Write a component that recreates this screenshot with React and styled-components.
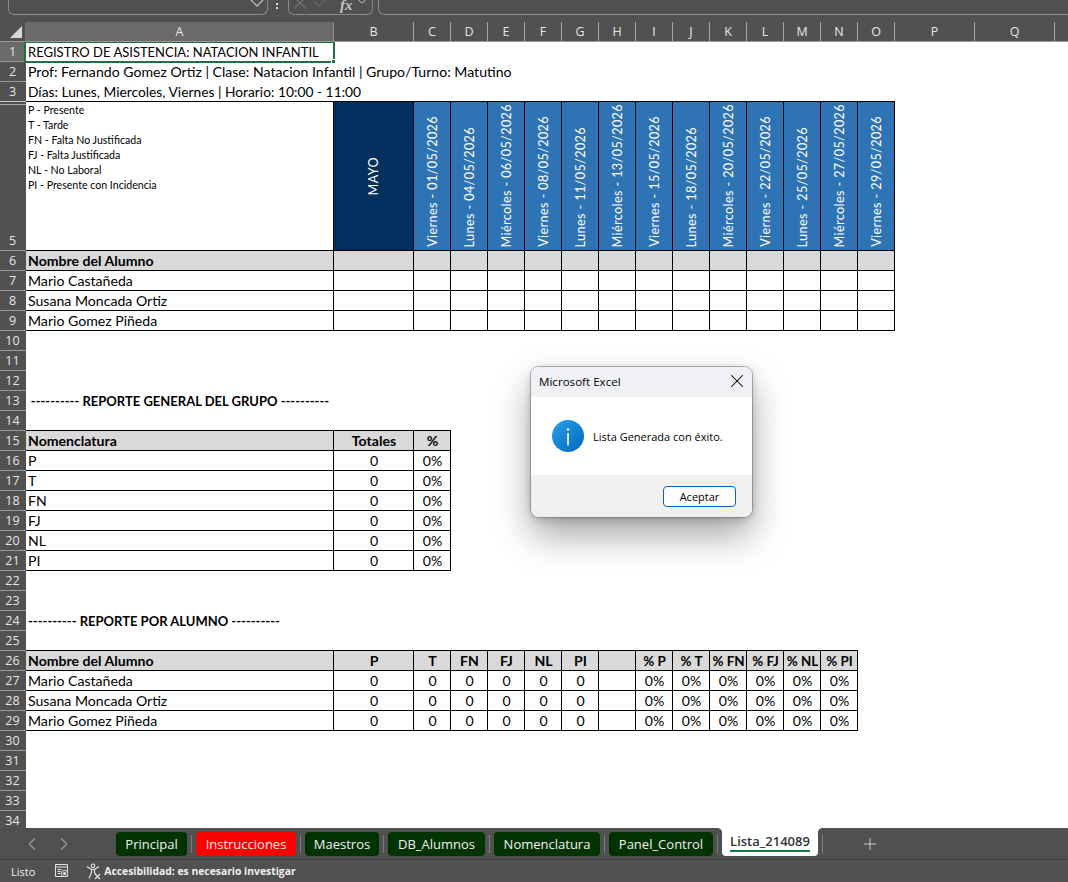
import React from "react";
import styled, { createGlobalStyle } from "styled-components";
import { ChevronDown, Check, X, ChevronLeft, ChevronRight, Plus } from "lucide-react";

const GlobalStyle = createGlobalStyle`
  html, body {
    margin: 0;
    padding: 0;
    background: #fff;
  }
`;

const COLS = "308px 80px repeat(14, 37px) 80px 80px 80px";
const HEADERS = [
  ["A", 308], ["B", 80], ["C", 37], ["D", 37], ["E", 37], ["F", 37], ["G", 37], ["H", 37], ["I", 37],
  ["J", 37], ["K", 37], ["L", 37], ["M", 37], ["N", 37], ["O", 37], ["P", 80], ["Q", 80],
];

const DATES = [
  "Viernes - 01/05/2026", "Lunes - 04/05/2026", "Miércoles - 06/05/2026", "Viernes - 08/05/2026",
  "Lunes - 11/05/2026", "Miércoles - 13/05/2026", "Viernes - 15/05/2026", "Lunes - 18/05/2026",
  "Miércoles - 20/05/2026", "Viernes - 22/05/2026", "Lunes - 25/05/2026", "Miércoles - 27/05/2026",
  "Viernes - 29/05/2026",
];

const LEGEND = [
  "P - Presente", "T - Tarde", "FN - Falta No Justificada", "FJ - Falta Justificada",
  "NL - No Laboral", "PI - Presente con Incidencia",
];

const STUDENTS = ["Mario Castañeda", "Susana Moncada Ortiz", "Mario Gomez Piñeda"];
const CODES = ["P", "T", "FN", "FJ", "NL", "PI"];
const TABS = [
  { name: "Principal", width: 71 },
  { name: "Instrucciones", width: 100, red: true },
  { name: "Maestros", width: 74 },
  { name: "DB_Alumnos", width: 97 },
  { name: "Nomenclatura", width: 106 },
  { name: "Panel_Control", width: 104 },
];

const Window = styled.div`
  position: relative;
  width: 1068px;
  height: 882px;
  overflow: hidden;
  display: flex;
  flex-direction: column;
  background: #fff;
  font-family: Lato, "Liberation Sans", sans-serif;
`;

const FormulaBar = styled.div`
  height: 22px;
  flex: none;
  box-sizing: border-box;
  background: #505050;
  display: flex;
  align-items: flex-start;
  padding-left: 8px;
  color: #c8c8c8;
  overflow: hidden;
`;

const NameBox = styled.div`
  width: 260px;
  height: 15px;
  box-sizing: border-box;
  border: 1px solid #8a8a8a;
  border-top: none;
  border-radius: 0 0 6px 6px;
  display: flex;
  justify-content: flex-end;
  align-items: flex-start;
  svg {
    margin: -9px -2px 0 0;
    flex: none;
  }
`;

const Grip = styled.div`
  width: 20px;
  height: 14px;
  flex: none;
  position: relative;
  &::before {
    content: "";
    position: absolute;
    left: 8px;
    top: 3px;
    width: 2px;
    height: 2px;
    background: #e0e0e0;
    box-shadow: 0 4px 0 #e0e0e0;
  }
`;

const FxBox = styled.div`
  width: 85px;
  height: 15px;
  box-sizing: border-box;
  border: 1px solid #8a8a8a;
  border-top: none;
  border-radius: 0 0 6px 6px;
  display: flex;
  align-items: flex-start;
  color: #7a7a7a;
  svg {
    margin-top: -8px;
    flex: none;
  }
`;

const FxLabel = styled.span`
  font-family: "Liberation Serif", serif;
  font-style: italic;
  font-weight: 700;
  font-size: 15px;
  line-height: 11px;
  color: #c4c4c4;
  margin-left: 9px;
`;

const FormulaInput = styled.div`
  flex: 1;
  margin-left: 5px;
  margin-right: -10px;
  height: 15px;
  box-sizing: border-box;
  border: 1px solid #8a8a8a;
  border-top: none;
  border-radius: 0 0 6px 6px;
`;

const ColumnBar = styled.div`
  height: 20px;
  flex: none;
  display: flex;
  background: #515151;
  border-bottom: 1px solid #9a9a9a;
  box-sizing: border-box;
`;

const Corner = styled.div`
  width: 26px;
  flex: none;
  position: relative;
  border-right: 1px solid #6f6f6f;
  box-sizing: border-box;
  &::after {
    content: "";
    position: absolute;
    right: 3px;
    bottom: 3px;
    border-style: solid;
    border-width: 0 0 12px 12px;
    border-color: transparent transparent #d8d8d8 transparent;
  }
`;

const ColHead = styled.div`
  flex: none;
  width: ${(p) => p.$w}px;
  box-sizing: border-box;
  border-right: 1px solid ${(p) => (p.$active ? "#8c8c8c" : "#a8a8a8")};
  background: ${(p) => (p.$active ? "#6a6a6a" : "transparent")};
  color: #e6e6e6;
  font-family: "Open Sans", sans-serif;
  font-size: 12.5px;
  line-height: 20px;
  text-align: center;
`;

const Sheet = styled.div`
  flex: 1;
  min-height: 0;
  overflow: hidden;
  position: relative;
`;

const Row = styled.div`
  display: flex;
  height: ${(p) => p.$h || 20}px;
`;

const RowHead = styled.div`
  width: 26px;
  flex: none;
  box-sizing: border-box;
  background: ${(p) => (p.$active ? "#6a6a6a" : "#515151")};
  border-bottom: 1px solid ${(p) => (p.$thick ? "#c9c9c9" : "#9a9a9a")};
  box-shadow: ${(p) => (p.$gapAbove ? "inset 0 2px 0 #515151, inset 0 3px 0 #a8a8a8" : "none")};
  color: #e6e6e6;
  font-family: "Open Sans", sans-serif;
  font-size: 12.5px;
  display: flex;
  align-items: flex-end;
  justify-content: center;
  padding: 0 1px 1px 0;
  line-height: 17px;
`;

const Cells = styled.div`
  display: grid;
  grid-template-columns: ${COLS};
  grid-template-rows: minmax(0, 1fr);
  flex: 1;
  min-width: 0;
  height: 100%;
`;

const Cell = styled.div`
  box-sizing: border-box;
  min-width: 0;
  min-height: 0;
  padding: 0 2px;
  font-size: ${(p) => p.$size || 14.1}px;
  line-height: ${(p) => (p.$size < 13.5 ? 21 : 20)}px;
  color: #000;
  white-space: nowrap;
  font-weight: ${(p) => (p.$bold ? 700 : 400)};
  text-align: ${(p) => p.$align || "left"};
  background: ${(p) => p.$bg || "transparent"};
  box-shadow: ${(p) => (p.$box ? "inset -1px -1px 0 #000, 0 -1px 0 #000" : "none")};
`;

const LegendCell = styled(Cell)`
  font-size: 10.6px;
  line-height: 15px;
  padding-top: 1px;
`;

const DateCell = styled(Cell)`
  padding: 0 0 4px;
  display: flex;
  justify-content: center;
  align-items: flex-end;
  color: #fff;
  background: ${(p) => p.$bg || "#2e74b5"};
`;

const MonthCell = styled(DateCell)`
  align-items: center;
  padding: 0;
`;

const VerticalText = styled.span`
  flex: none;
  writing-mode: vertical-rl;
  transform: rotate(180deg);
  font-size: 12.6px;
  letter-spacing: 0.4px;
  line-height: 16px;
`;

const Selection = styled.div`
  position: absolute;
  left: 24px;
  top: -1px;
  width: 311px;
  height: 22px;
  box-sizing: border-box;
  border: 2px solid #1f7145;
  &::after {
    content: "";
    position: absolute;
    right: -3px;
    bottom: -3px;
    width: 5px;
    height: 5px;
    background: #1f7145;
    border: 1px solid #fff;
    box-sizing: border-box;
  }
`;

const TabBar = styled.div`
  height: 32px;
  flex: none;
  background: #505050;
  border-bottom: 1px solid #3d3d3d;
  box-sizing: border-box;
  display: flex;
  align-items: flex-start;
  color: #9a9a9a;
`;

const Arrows = styled.div`
  width: 116px;
  flex: none;
  height: 27px;
  display: flex;
  align-items: center;
  padding-left: 21px;
  gap: 10px;
  box-sizing: border-box;
  margin-top: 2px;
`;

const Tab = styled.div`
  width: ${(p) => p.$w}px;
  height: 24px;
  margin-top: 4px;
  flex: none;
  border-radius: 4px;
  background: ${(p) => (p.$red ? "#ff0000" : "#003300")};
  color: #f2f2f2;
  line-height: 24px;
  text-align: center;
  font-family: "Open Sans", sans-serif;
  font-size: 13px;
`;

const TabSeparator = styled.div`
  width: 1px;
  height: 18px;
  margin: 7px 4px 0;
  flex: none;
  background: #7c7c7c;
`;

const ActiveTab = styled.div`
  width: 96px;
  height: 28px;
  flex: none;
  box-sizing: border-box;
  background: #fff;
  border-radius: 0 0 4px 4px;
  color: #333;
  font-family: "Open Sans", sans-serif;
  font-size: 13px;
  font-weight: 600;
  text-align: center;
  line-height: 26px;
  position: relative;
  &::before {
    content: "";
    position: absolute;
    left: -4px;
    right: -4px;
    top: 0;
    height: 4px;
    background:
      radial-gradient(circle at 0 100%, #505050 3.5px, #fff 4px) left top / 4px 4px no-repeat,
      radial-gradient(circle at 100% 100%, #505050 3.5px, #fff 4px) right top / 4px 4px no-repeat;
  }
  &::after {
    content: "";
    position: absolute;
    left: 8px;
    right: 8px;
    bottom: 4px;
    height: 2px;
    background: #107c41;
  }
`;

const AddSheet = styled.div`
  margin-left: 33px;
  margin-top: 6px;
  color: #e0e0e0;
  display: flex;
`;

const StatusBar = styled.div`
  height: 22px;
  flex: none;
  background: #515151;
  display: flex;
  align-items: center;
  color: #f0f0f0;
  font-family: "Open Sans", sans-serif;
  font-size: 11px;
  padding-left: 11px;
`;

const StatusIcon = styled.span`
  display: flex;
  margin-left: ${(p) => p.$ml}px;
`;

const StatusBold = styled.span`
  margin-left: 2px;
  font-weight: 700;
  font-size: 10.35px;
`;

const DialogShadow = styled.div`
  position: absolute;
  left: 531px;
  top: 367px;
  width: 221px;
  height: 150px;
  border-radius: 8px;
  box-shadow: 0 0 0 1px rgba(90, 90, 90, 0.45), 0 18px 36px rgba(0, 0, 0, 0.36), 0 2px 8px rgba(0, 0, 0, 0.2);
`;

const Dialog = styled.div`
  position: absolute;
  left: 531px;
  top: 367px;
  width: 221px;
  height: 150px;
  box-sizing: border-box;
  display: flex;
  flex-direction: column;
  border-radius: 8px;
  overflow: hidden;
  font-family: "Open Sans", sans-serif;
  color: #000;
`;

const DialogTitle = styled.div`
  height: 30px;
  box-sizing: border-box;
  padding: 0 4px 2px 8px;
  flex: none;
  background: #f0f1f5;
  display: flex;
  align-items: center;
  justify-content: space-between;
  font-size: 11.6px;
`;

const DialogBody = styled.div`
  flex: 1;
  background: #fff;
  display: flex;
  align-items: center;
  gap: 9px;
  padding-left: 21px;
  font-size: 11px;
`;

const DialogFooter = styled.div`
  height: 42px;
  flex: none;
  background: #f0f0f0;
  display: flex;
  justify-content: flex-end;
  align-items: flex-start;
  padding: 11px 16px 0 0;
  box-sizing: border-box;
`;

const DialogButton = styled.div`
  width: 73px;
  height: 21px;
  box-sizing: border-box;
  background: #fdfdfd;
  border: 1px solid #0067c0;
  border-radius: 4px;
  font-size: 11px;
  line-height: 19px;
  text-align: center;
`;

const InfoIcon = () => (
  <svg width="32" height="32" viewBox="0 0 32 32">
    <defs>
      <linearGradient id="infoFill" x1="0" y1="0" x2="1" y2="1">
        <stop offset="0" stopColor="#2aa0e6" />
        <stop offset="1" stopColor="#0067c0" />
      </linearGradient>
    </defs>
    <circle cx="16" cy="16" r="16" fill="url(#infoFill)" />
    <rect x="15.2" y="13" width="1.6" height="12.5" fill="#fff" />
    <circle cx="16" cy="9.5" r="1.2" fill="#fff" />
  </svg>
);

const MacroIcon = () => (
  <svg width="16" height="16" viewBox="0 0 16 16" fill="none" stroke="#e4e4e4" strokeWidth="1">
    <path d="M1.5 1.5h12v12h-12z" />
    <path d="M1.5 4h12M3.5 6.5h4M3.5 8.5h3M3.5 10.5h3" />
    <circle cx="10.5" cy="10.5" r="3.2" fill="#515151" />
    <circle cx="10.5" cy="10.5" r="1.2" fill="#e4e4e4" />
  </svg>
);

const AccessIcon = () => (
  <svg width="16" height="17" viewBox="0 0 16 17" fill="none" stroke="#ececec" strokeWidth="1.1">
    <circle cx="7" cy="2.8" r="1.8" />
    <path d="M1 3.5l4.5 3h3l4.5-3M5.5 6.5v3L3 15.5M8.5 6.5v3l1 1.5" />
    <path d="M9 11l5 5M14 11l-5 5" />
  </svg>
);

const blanks = (n) =>
  Array.from({ length: n }, (_, i) => <Cell key={`blank-${i}`} $box />);

const SheetRow = ({ n, h, active, thick, gapAbove, children }) => (
  <Row $h={h}>
    <RowHead $active={active} $thick={thick} $gapAbove={gapAbove}>{n}</RowHead>
    <Cells>{children}</Cells>
  </Row>
);

const App = () => {
  const empty = (n) => <SheetRow key={n} n={n} />;

  return (
    <Window>
      <GlobalStyle />
      <FormulaBar>
        <NameBox><ChevronDown size={24} strokeWidth={1.1} /></NameBox>
        <Grip />
        <FxBox>
          <X size={22} strokeWidth={1.1} />
          <Check size={20} strokeWidth={1.2} />
          <FxLabel>fx</FxLabel>
          <ChevronDown size={18} strokeWidth={1.3} color="#c8c8c8" />
        </FxBox>
        <FormulaInput />
      </FormulaBar>

      <ColumnBar>
        <Corner />
        {HEADERS.map(([name, w]) => (
          <ColHead key={name} $w={w} $active={name === "A"}>{name}</ColHead>
        ))}
      </ColumnBar>

      <Sheet>
        <SheetRow n={1} active>
          <Cell $size={13}>REGISTRO DE ASISTENCIA: NATACION INFANTIL</Cell>
        </SheetRow>
        <SheetRow n={2}>
          <Cell>Prof: Fernando Gomez Ortiz | Clase: Natacion Infantil | Grupo/Turno: Matutino</Cell>
        </SheetRow>
        <SheetRow n={3} thick>
          <Cell $size={13.8}>Días: Lunes, Miercoles, Viernes | Horario: 10:00 - 11:00</Cell>
        </SheetRow>
        <SheetRow n={5} h={149} gapAbove>
          <LegendCell $box>
            {LEGEND.map((item) => <div key={item}>{item}</div>)}
          </LegendCell>
          <MonthCell $box $bg="#03305f"><VerticalText>MAYO</VerticalText></MonthCell>
          {DATES.map((d) => (
            <DateCell key={d} $box><VerticalText>{d}</VerticalText></DateCell>
          ))}
        </SheetRow>
        <SheetRow n={6}>
          <Cell $box $bold $bg="#d9d9d9">Nombre del Alumno</Cell>
          {Array.from({ length: 14 }, (_, i) => <Cell key={i} $box $bg="#d9d9d9" />)}
        </SheetRow>
        {STUDENTS.map((s, i) => (
          <SheetRow key={s} n={7 + i}>
            <Cell $box>{s}</Cell>
            {blanks(14)}
          </SheetRow>
        ))}
        {[10, 11, 12].map(empty)}
        <SheetRow n={13}>
          <Cell $bold $size={13} $align="center">---------- REPORTE GENERAL DEL GRUPO ----------</Cell>
        </SheetRow>
        {empty(14)}
        <SheetRow n={15}>
          <Cell $box $bold $bg="#d9d9d9">Nomenclatura</Cell>
          <Cell $box $bold $bg="#d9d9d9" $align="center">Totales</Cell>
          <Cell $box $bold $bg="#d9d9d9" $align="center">%</Cell>
        </SheetRow>
        {CODES.map((c, i) => (
          <SheetRow key={c} n={16 + i}>
            <Cell $box>{c}</Cell>
            <Cell $box $align="center">0</Cell>
            <Cell $box $align="center">0%</Cell>
          </SheetRow>
        ))}
        {[22, 23].map(empty)}
        <SheetRow n={24}>
          <Cell $bold $size={13}>---------- REPORTE POR ALUMNO ----------</Cell>
        </SheetRow>
        {empty(25)}
        <SheetRow n={26}>
          <Cell $box $bold $bg="#d9d9d9">Nombre del Alumno</Cell>
          {CODES.map((c) => <Cell key={c} $box $bold $bg="#d9d9d9" $align="center">{c}</Cell>)}
          <Cell $box $bg="#d9d9d9" />
          {CODES.map((c) => <Cell key={c} $box $bold $size={13.4} $bg="#d9d9d9" $align="center">% {c}</Cell>)}
        </SheetRow>
        {STUDENTS.map((s, i) => (
          <SheetRow key={s} n={27 + i}>
            <Cell $box>{s}</Cell>
            {CODES.map((c) => <Cell key={c} $box $align="center">0</Cell>)}
            <Cell $box />
            {CODES.map((c) => <Cell key={c} $box $align="center">0%</Cell>)}
          </SheetRow>
        ))}
        {[30, 31, 32, 33, 34].map(empty)}
        <Selection />
      </Sheet>

      <TabBar>
        <Arrows>
          <ChevronLeft size={22} strokeWidth={1.2} />
          <ChevronRight size={22} strokeWidth={1.2} />
        </Arrows>
        {TABS.map((t) => (
          <React.Fragment key={t.name}>
            <Tab $w={t.width} $red={t.red}>{t.name}</Tab>
            <TabSeparator />
          </React.Fragment>
        ))}
        <ActiveTab>Lista_214089</ActiveTab>
        <TabSeparator />
        <AddSheet><Plus size={20} strokeWidth={1} /></AddSheet>
      </TabBar>

      <StatusBar>
        Listo
        <StatusIcon $ml={19}><MacroIcon /></StatusIcon>
        <StatusIcon $ml={16}><AccessIcon /></StatusIcon>
        <StatusBold>Accesibilidad: es necesario investigar</StatusBold>
      </StatusBar>

      <DialogShadow />
      <Dialog>
        <DialogTitle>
          Microsoft Excel
          <X size={22} strokeWidth={1.1} />
        </DialogTitle>
        <DialogBody>
          <InfoIcon />
          Lista Generada con éxito.
        </DialogBody>
        <DialogFooter>
          <DialogButton>Aceptar</DialogButton>
        </DialogFooter>
      </Dialog>
    </Window>
  );
};

export default App;
